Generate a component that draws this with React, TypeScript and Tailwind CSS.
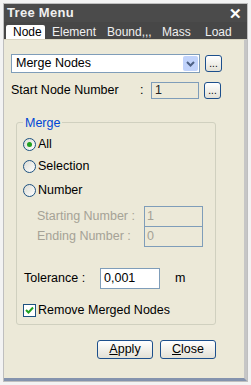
import React from 'react'

const font = { fontFamily: '"Liberation Sans", Arial, sans-serif' }

const Dots = () => (
  <button className="w-[17px] h-[17px] rounded-[3px] border border-[#1c4f8c] bg-gradient-to-b from-white to-[#e3e1d6] flex items-end justify-center pb-[2px] text-[10px] leading-none text-black">
    ...
  </button>
)

const Radio = ({ checked, label }: { checked?: boolean; label: string }) => (
  <div className="flex items-center gap-[2px] h-[22px]">
    <span className="w-[13px] h-[13px] rounded-full border border-[#1c5180] bg-gradient-to-br from-[#dcdcd4] to-white flex items-center justify-center">
      {checked && <span className="w-[5px] h-[5px] rounded-full bg-[#21a121]" />}
    </span>
    <span className="text-black">{label}</span>
  </div>
)

export default function App() {
  return (
    <div style={font} className="w-[251px] h-[385px] bg-[#f3f3f3] pt-[3px] px-[3px] overflow-hidden">
      <div className="h-[379px] flex flex-col border border-[#bfbfbf]">
        {/* title */}
        <div className="h-[18px] bg-[#4b4b4b] flex items-center justify-between pl-[3px] pr-[5px]">
          <span className="text-[13px] font-bold text-[#f0f0f0] tracking-[0.3px]">Tree Menu</span>
          <span className="text-[15px] font-bold text-white leading-none">✕</span>
        </div>
        {/* tabs */}
        <div className="h-[17px] bg-[#474747] flex items-end pl-[2px] text-[12px] whitespace-nowrap">
          <div className="w-[39px] h-[14px] pl-[7px] bg-white text-black leading-[14px] rounded-t-[2px]">Node</div>
          <div className="w-[57px] pl-[7px] text-[#f0f0f0] leading-[14px] h-[14px]">Element</div>
          <div className="w-[54px] pl-[5px] text-[#f0f0f0] leading-[14px] h-[14px]">Bound,,,</div>
          <div className="w-[42px] pl-[6px] text-[#f0f0f0] leading-[14px] h-[14px]">Mass</div>
          <div className="w-[39px] pl-[7px] text-[#f0f0f0] leading-[14px] h-[14px]">Load</div>
        </div>
        {/* body */}
        <div className="flex-1 bg-[#ece9d8] border-t border-[#d8d4c0] border-r-[3px] border-r-[#c6c6c6] border-b-[3px] border-b-[#8493ad] pl-[7px] pt-[14px] text-[12.5px] text-black whitespace-nowrap">
          <div className="flex items-center gap-[5px]">
            <div className="w-[189px] h-[19px] bg-white border border-[#7f9db9] flex items-center justify-between pl-[4px] pr-[1px]">
              <span>Merge Nodes</span>
              <span className="w-[15px] h-[15px] bg-[#c1d3fb] rounded-[2px] flex items-center justify-center">
                <svg width="9" height="6" viewBox="0 0 9 6"><path d="M1 1l3.5 3.5L8 1" stroke="#4d6185" strokeWidth="2" fill="none" /></svg>
              </span>
            </div>
            <Dots />
          </div>
          <div className="flex items-center mt-[9px] h-[17px]">
            <span className="w-[129px]">Start Node Number</span>
            <span className="w-[11px]">:</span>
            <div className="w-[48px] h-[17px] border border-[#7f9db9] pl-[3px] leading-[15px] text-[#222]">1</div>
            <span className="ml-[5px]"><Dots /></span>
          </div>
          {/* group */}
          <div className="relative mt-[23px] ml-[5px] w-[200px] border border-[#d0d0bf] rounded-[3px] pl-[6px] pt-[10px] pb-[4px]">
            <span className="absolute -top-[9px] left-[6px] px-[2px] bg-[#ece9d8] text-[#0046d5]">Merge</span>
            <Radio checked label="All" />
            <Radio label="Selection" />
            <div className="mt-[2px]"><Radio label="Number" /></div>
            <div className="flex items-center mt-[5px] text-[#a5a296]">
              <span className="w-[121px] pl-[14px]">Starting Number :</span>
              <div className="w-[59px] h-[21px] border border-[#7f9db9] pl-[2px] leading-[19px]">1</div>
            </div>
            <div className="flex items-center text-[#a5a296] -mt-[1px]">
              <span className="w-[121px] pl-[14px]">Ending Number :</span>
              <div className="w-[59px] h-[21px] border border-[#7f9db9] pl-[2px] leading-[19px]">0</div>
            </div>
            <div className="flex items-center mt-[21px] h-[21px]">
              <span className="w-[77px] pl-[1px]">Tolerance :</span>
              <div className="w-[60px] h-[21px] bg-white border border-[#7f9db9] pl-[3px] leading-[19px]">0,001</div>
              <span className="ml-[15px]">m</span>
            </div>
            <div className="flex items-center gap-[2px] mt-[12px]">
              <span className="w-[13px] h-[13px] border border-[#1c5180] bg-white flex items-center justify-center">
                <svg width="9" height="8" viewBox="0 0 9 8"><path d="M1 4l2.5 2.5L8 1.5" stroke="#21a121" strokeWidth="2" fill="none" /></svg>
              </span>
              <span>Remove Merged Nodes</span>
            </div>
          </div>
          <div className="w-[205px] flex justify-end gap-[7px] mt-[15px]">
            <button className="w-[56px] h-[19px] rounded-[3px] border border-[#1c4f8c] bg-gradient-to-b from-white to-[#e3e1d6] leading-none"><u>A</u>pply</button>
            <button className="w-[56px] h-[19px] rounded-[3px] border border-[#1c4f8c] bg-gradient-to-b from-white to-[#e3e1d6] leading-none"><u>C</u>lose</button>
          </div>
        </div>
      </div>
    </div>
  )
}
